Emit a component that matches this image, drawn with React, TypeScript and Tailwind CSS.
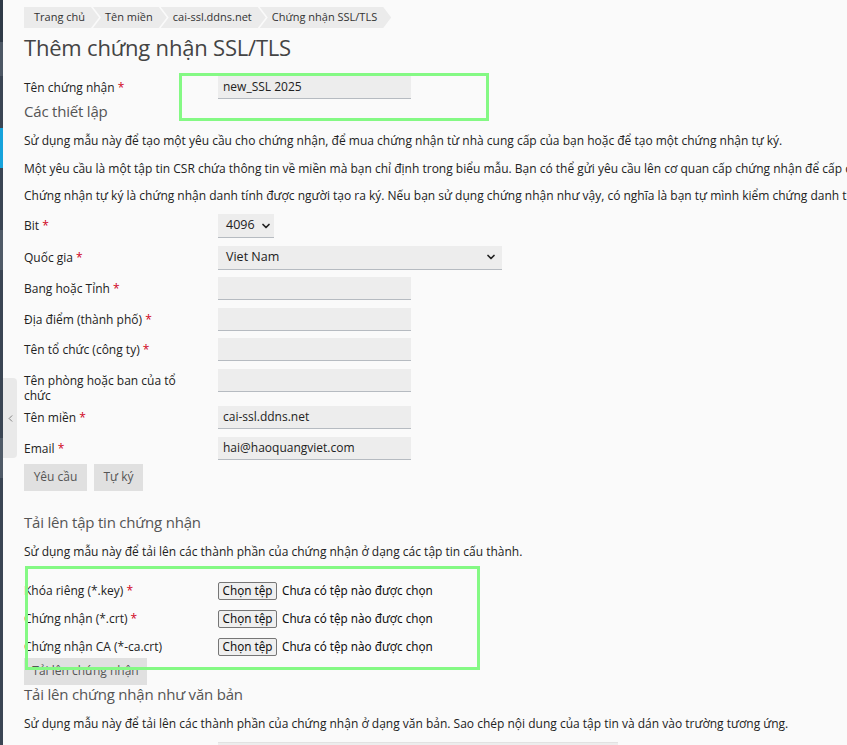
import { ChevronDown, ChevronLeft } from "lucide-react";

const CRUMBS = ["Trang chủ", "Tên miền", "cai-ssl.ddns.net", "Chứng nhận SSL/TLS"];

const CSR_FIELDS = [
  { label: "Bang hoặc Tỉnh", required: true, value: "" },
  { label: "Địa điểm (thành phố)", required: true, value: "" },
  { label: "Tên tổ chức (công ty)", required: true, value: "" },
  { label: "Tên phòng hoặc ban của tổ chức", required: false, value: "", tall: true },
  { label: "Tên miền", required: true, value: "cai-ssl.ddns.net" },
  { label: "Email", required: true, value: "hai@haoquangviet.com" },
];

const FILE_FIELDS = [
  { label: "Khóa riêng (*.key)", required: true },
  { label: "Chứng nhận (*.crt)", required: true },
  { label: "Chứng nhận CA (*-ca.crt)", required: false },
];

function Req() {
  return <span className="text-[#d0021b]"> *</span>;
}

function Label({ text, required, tall }: { text: string; required?: boolean; tall?: boolean }) {
  return (
    <div className={`w-[194px] shrink-0 pr-[30px] pt-[4px] leading-[15px] ${tall ? "-mb-[4px]" : ""}`}>
      {text}
      {required && <Req />}
    </div>
  );
}

function TextBox({ value, w = "w-[193px]" }: { value: string; w?: string }) {
  return (
    <div className={`${w} h-[23px] bg-[#ededed] border-b border-[#b6bbc1] px-[5px] leading-[22px] text-[12px] text-[#222]`}>
      {value}
    </div>
  );
}

function SelectBox({ value, w, pr }: { value: string; w: string; pr: string }) {
  return (
    <div className={`${w} ${pr} h-[24px] bg-[#ededed] border-b border-[#b6bbc1] pl-[8px] flex items-center justify-between text-[12.5px] text-[#222]`}>
      <span>{value}</span>
      <ChevronDown size={12} strokeWidth={3.5} className="text-[#222]" />
    </div>
  );
}

function GreyButton({ children, w }: { children: React.ReactNode; w: string }) {
  return (
    <button className={`${w} h-[27px] bg-[#e0e0e0] text-[#555] text-[12px] flex items-center justify-center`}>
      {children}
    </button>
  );
}

function FilePicker() {
  return (
    <div className="flex items-center gap-[5px] font-['Noto_Sans',sans-serif] text-[11.7px] text-[#111]">
      <span className="h-[18px] w-[59px] border border-[#767676] bg-[#efefef] rounded-[2px] flex items-center justify-center leading-none">
        Chọn tệp
      </span>
      <span>Chưa có tệp nào được chọn</span>
    </div>
  );
}

export default function App() {
  return (
    <div className="relative flex w-full h-[745px] overflow-hidden bg-[#fafafa] font-['Open_Sans',sans-serif] text-[12px] text-[#222]">
      {/* sidebar edge */}
      <div className="w-[3px] shrink-0 flex flex-col">
        <div className="h-[42px] bg-[#2f3a47]" />
        <div className="h-[34px] bg-[#4c5764]" />
        <div className="h-[52px] bg-[#3a4553]" />
        <div className="h-[40px] bg-[#17a3dc]" />
        <div className="h-[62px] bg-[#3a4553]" />
        <div className="h-[40px] bg-[#4f5a67]" />
        <div className="h-[168px] bg-[#3a4553]" />
        <div className="h-[40px] bg-[#4f5a67]" />
        <div className="flex-1 bg-[#3a4553]" />
      </div>

      {/* collapse tab */}
      <div className="absolute left-[3px] top-[378px] w-[14px] h-[80px] bg-[#e9e9e9] rounded-r-[4px] flex items-center justify-center">
        <ChevronLeft size={11} strokeWidth={1.5} className="text-[#555]" />
      </div>

      <main className="flex-1 pl-[21px] pt-[7px] whitespace-nowrap">
        {/* breadcrumb */}
        <nav className="flex h-[21px] text-[11px] text-[#333]">
          {CRUMBS.map((c, i) => (
            <span
              key={c}
              className={
                i === 0
                  ? "flex items-center bg-[#ebebeb] pl-[10px] pr-[14px] [clip-path:polygon(0_0,calc(100%-8px)_0,100%_50%,calc(100%-8px)_100%,0_100%)]"
                  : "flex items-center bg-[#ebebeb] -ml-[6px] pl-[12px] pr-[14px] [clip-path:polygon(0_0,calc(100%-8px)_0,100%_50%,calc(100%-8px)_100%,0_100%,8px_50%)]"
              }
            >
              {c}
            </span>
          ))}
        </nav>

        <h1 className="mt-[4px] text-[22px] leading-[30px] tracking-[-0.2px] text-[#444]">Thêm chứng nhận SSL/TLS</h1>

        <div className="mt-[14px] flex items-start">
          <Label text="Tên chứng nhận" required />
          <TextBox value="new_SSL 2025" />
        </div>

        <h2 className="mt-[1px] text-[15px] leading-[22px] tracking-[-0.2px] text-[#555]">Các thiết lập</h2>

        <p className="mt-[9px] leading-[20px]">
          Sử dụng mẫu này để tạo một yêu cầu cho chứng nhận, để mua chứng nhận từ nhà cung cấp của bạn hoặc để tạo một chứng nhận tự ký.
        </p>
        <p className="mt-[8px] leading-[20px]">
          Một yêu cầu là một tập tin CSR chứa thông tin về miền mà bạn chỉ định trong biểu mẫu. Bạn có thể gửi yêu cầu lên cơ quan cấp chứng nhận để cấp chứng nhận cho miền của bạn.
        </p>
        <p className="mt-[7px] leading-[20px]">
          Chứng nhận tự ký là chứng nhận danh tính được người tạo ra ký. Nếu bạn sử dụng chứng nhận như vậy, có nghĩa là bạn tự mình kiểm chứng danh tính của mình.
        </p>

        <div className="mt-[8px] flex flex-col gap-[7.5px]">
          <div className="flex items-start">
            <Label text="Bit" required />
            <SelectBox value="4096" w="w-[56px]" pr="pr-[2px]" />
          </div>
          <div className="flex items-start">
            <Label text="Quốc gia" required />
            <SelectBox value="Viet Nam" w="w-[284px]" pr="pr-[5px]" />
          </div>
          {CSR_FIELDS.map((f) => (
            <div key={f.label} className="flex items-start whitespace-normal">
              <Label text={f.label} required={f.required} tall={f.tall} />
              <TextBox value={f.value} />
            </div>
          ))}
        </div>

        <div className="mt-[4px] flex gap-[7px]">
          <GreyButton w="w-[63px]">Yêu cầu</GreyButton>
          <GreyButton w="w-[49px]">Tự ký</GreyButton>
        </div>

        <h2 className="mt-[20px] text-[15px] leading-[22px] tracking-[-0.2px] text-[#555]">Tải lên tập tin chứng nhận</h2>
        <p className="mt-[9px] leading-[20px]">
          Sử dụng mẫu này để tải lên các thành phần của chứng nhận ở dạng các tập tin cấu thành.
        </p>

        <div className="mt-[19px] flex flex-col gap-[8px]">
          {FILE_FIELDS.map((f) => (
            <div key={f.label} className="flex items-center h-[20px]">
              <div className="w-[194px] shrink-0">
                {f.label}
                {f.required && <Req />}
              </div>
              <FilePicker />
            </div>
          ))}
        </div>

        <div className="mt-[1px]">
          <GreyButton w="w-[123px]">Tải lên chứng nhận</GreyButton>
        </div>

        <h2 className="text-[15px] leading-[18px] tracking-[-0.2px] text-[#555]">Tải lên chứng nhận như văn bản</h2>
        <p className="mt-[11px] leading-[20px]">
          Sử dụng mẫu này để tải lên các thành phần của chứng nhận ở dạng văn bản. Sao chép nội dung của tập tin và dán vào trường tương ứng.
        </p>
        <div className="mt-[8px] flex">
          <div className="w-[194px] shrink-0" />
          <div className="w-[400px] h-[80px] bg-[#ededed] border-t border-[#e2e2e2]" />
        </div>
      </main>

      {/* highlight boxes */}
      <div className="absolute left-[179px] top-[73px] w-[310px] h-[48px] border-[3px] border-[#84f984]" />
      <div className="absolute left-[25px] top-[566px] w-[455px] h-[104px] border-[3px] border-[#84f984]" />
    </div>
  );
}
